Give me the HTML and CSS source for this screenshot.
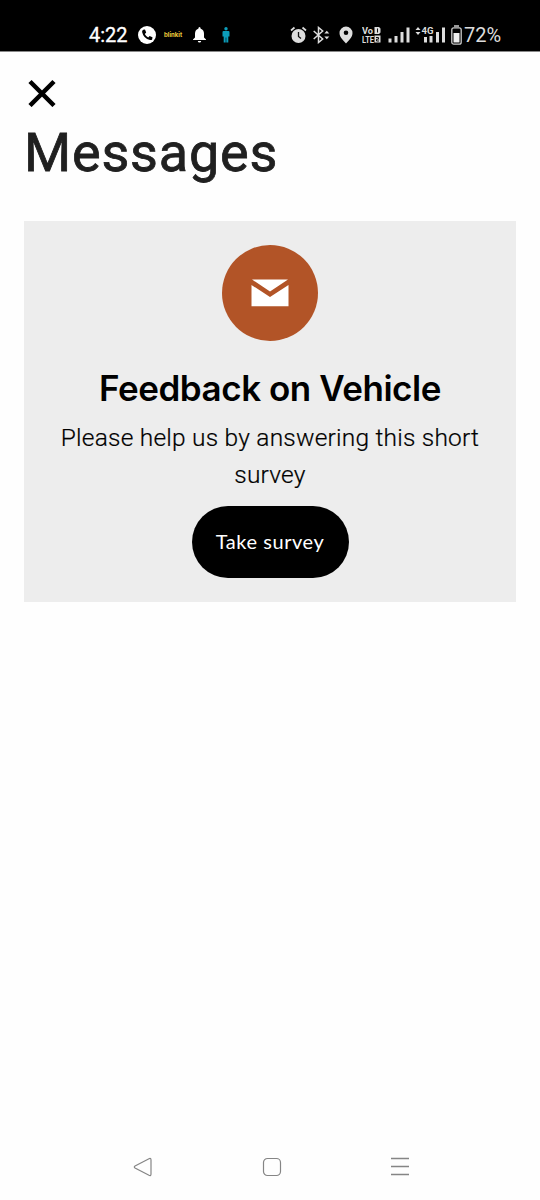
FILE: index.html
```html
<!DOCTYPE html>
<html lang="en">
<head>
<meta charset="utf-8">
<title>Messages</title>
<link rel="stylesheet" href="styles.css">
</head>
<body>
<div class="screen">
  <header class="status">
    <div class="status-left">
      <span class="clock">4:22</span>
      <svg class="phone" width="18" height="18" viewBox="0 0 18 18"><circle cx="9" cy="9" r="9" fill="#fff"/><path d="M5.2 3.8 7 3.5 8.2 6.6 6.8 7.9Q8 10.3 10.2 11.4L11.6 10 14.5 11.2 14.2 13.2Q13.6 14.4 12 14 5.5 12.5 4.1 6 3.9 4.5 5.2 3.8Z" fill="#000"/></svg>
      <span class="brand">blinkit</span>
      <svg class="bell" width="13" height="16" viewBox="0 0 13 16"><path d="M6.5 0Q7.6 0 7.7 1.7 11 2.8 11 6.7V10.5L13 12.4V13H0v-.6L2 10.500V6.7Q2 2.800 5.300 1.700 5.400 0 6.500 0ZM4.800 14H8.200Q8 15.500 6.500 15.500 5 15.500 4.800 14Z" fill="#fff"/></svg>
      <svg class="person" width="8" height="16" viewBox="0 0 8 16"><circle cx="4" cy="1.700" r="1.700" fill="#0c9dba"/><path d="M1.500 4H6.500Q7.500 4 7.500 5.200V9.500H6.300V15.500H4.300V10.500H3.700V15.500H1.700V9.500H.5V5.200Q.5 4 1.500 4Z" fill="#0c9dba"/></svg>
    </div>
    <div class="status-right">
      <svg width="17" height="18" viewBox="0 0 17 18"><circle cx="8.500" cy="10" r="7" fill="#ddd"/><path d="M1 4.500 4.500 1.500M16 4.500 12.500 1.500" stroke="#ddd" stroke-width="1.700"/><path d="M8.500 6V10.500L11 12.500" fill="none" stroke="#111" stroke-width="1.300"/></svg>
      <svg class="bluetooth" width="17" height="18" viewBox="0 0 17 18"><path d="M.7 5 9.700 13 5.500 16.500V1.500L9.700 5 .7 13" fill="none" stroke="#ddd" stroke-width="1.500"/><path d="M11.300 7.500 13.800 4.700 16.300 7.500ZM11.300 10.500 13.800 13.300 16.300 10.500Z" fill="#ddd"/></svg>
      <svg class="pin" width="14" height="18" viewBox="0 0 14 18"><path fill-rule="evenodd" d="M7 .5A6.500 6.500 0 0 1 13.500 7C13.500 11 10 14.300 7 17.500 4 14.300.5 11 .5 7A6.500 6.500 0 0 1 7 .5ZM7 4.500A2.300 2.300 0 1 0 7 9.100 2.300 2.300 0 1 0 7 4.500Z" fill="#ddd"/></svg>
      <svg class="volte" width="20" height="18" viewBox="0 0 20 18"><g class="tiny-label"><text x="0" y="7.800" textLength="11" lengthAdjust="spacingAndGlyphs">Vo</text><text x="0" y="16.500" textLength="12" lengthAdjust="spacingAndGlyphs">LTE</text></g><path d="M12.500 1H17L18.500 2.500V6.500L17 8H12.500ZM12.500 9.500H18.500V16.500H12.500Z" fill="#ddd"/><path d="M15.500 2.500V6.500M14 11.500H16.500V13.200H14.500V15H17" fill="none" stroke="#111"/></svg>
      <svg class="signal" width="23" height="18" viewBox="0 0 23 18"><path d="M.5 12.500h3v4h-3zM6.500 10h3v6.500h-3zM12.500 6h3v10.500h-3zM18.500 1.500h3v15h-3z" fill="#ddd"/></svg>
      <svg class="signal-4g" width="32" height="18" viewBox="0 0 32 18"><path d="M.5 4 3 1 5.500 4ZM.5 6 3 9 5.500 6ZM9 11h3v5.500H9zM14.500 10h3v6.500h-3zM21 6h3v10.500h-3zM27 1.500h3v15h-3z" fill="#ddd"/><text class="tiny-label" x="6.500" y="8" textLength="12" lengthAdjust="spacingAndGlyphs">4G</text></svg>
      <svg class="battery" width="11" height="20" viewBox="0 0 11 20"><path d="M3 1H8" stroke="#999" stroke-width="2"/><rect x=".8" y="2.800" width="9.400" height="16.400" rx="2" fill="none" stroke="#ccc" stroke-width="1.300"/><path d="M2.500 8h6v9.500h-6z" fill="#eee"/></svg>
      <span class="percent">72%</span>
    </div>
  </header>
  <main class="content">
    <svg class="close" width="28" height="28" viewBox="0 0 28 28"><path d="M2 2.500 26 26.500M26 2.500 2 26.500" stroke="#000" stroke-width="4.500"/></svg>
    <h1 class="title">Messages</h1>
    <section class="card">
      <div class="badge"><svg width="38" height="28" viewBox="0 0 38 28"><path d="M1 .5H37L19 12.500ZM.5 6 19 18 37.500 6V27.300H.5Z" fill="#fff"/></svg></div>
      <h2 class="card-title">Feedback on Vehicle</h2>
      <p class="card-text">Please help us by answering this short<br>survey</p>
      <button class="survey">Take survey</button>
    </section>
  </main>
  <nav class="navbar">
    <svg width="20" height="20" viewBox="0 0 20 20"><path d="M2 9 16 1.700Q18 .8 18 3V17Q18 19.200 16 18.300L2 11Q.6 10 2 9Z" fill="none" stroke="#858585" stroke-width="1.200"/></svg>
    <svg width="20" height="20" viewBox="0 0 20 20"><rect x="1.500" y="1.500" width="17" height="17" rx="4" fill="none" stroke="#858585" stroke-width="1.200"/></svg>
    <svg width="20" height="20" viewBox="0 0 20 20"><path d="M1 1.500H19M1 9.500H19M1 17.500H19" stroke="#858585" stroke-width="1.300"/></svg>
  </nav>
</div>
</body>
</html>
```
FILE: styles.css
```css
* { box-sizing: border-box; }
body { margin: 0; background: #fff; font-family: Roboto, "Liberation Sans", sans-serif; }
svg { display: block; flex: none; }
.screen { width: 540px; height: 1200px; display: flex; flex-direction: column; background: #fefefe; }
.status { height: 52px; padding: 18px 39px 0 89px; background: #000; border-bottom: 1px solid #888; display: flex; justify-content: space-between; color: #fff; }
.status-left, .status-right { display: flex; align-items: center; height: 33px; }
.clock { width: 38px; font-size: 20px; -webkit-text-stroke: 0.3px #fff; white-space: nowrap; }
.phone { margin-left: 11px; }
.brand { width: 19px; margin-left: 8px; font: 700 6px Inter, sans-serif; letter-spacing: 0; color: #f0cd3d; }
.bell { margin-left: 10px; }
.person { margin-left: 16px; }
.bluetooth { margin-left: 6px; }
.pin { margin-left: 9px; }
.volte { margin-left: 9px; }
.signal { margin-left: 6px; }
.signal-4g { margin-left: 4px; }
.battery { margin-left: 4px; }
.percent { width: 37px; margin-left: 2px; font-size: 20px; color: #ddd; white-space: nowrap; }
.tiny-label { font: 700 9px Roboto, sans-serif; fill: #ddd; }
.content { flex: 1; padding: 27px 24px 0; }
.close { margin-left: 4px; }
.title { margin: 10px 0 0; height: 104px; font-size: 54px; line-height: 72px; font-weight: 400; color: #202020; letter-spacing: 0.8px; -webkit-text-stroke: 0.8px #202020; }
.card { height: 381px; padding-top: 24px; background: #ededed; display: flex; flex-direction: column; align-items: center; color: #000; }
.badge { width: 96px; height: 96px; border-radius: 50%; background: #b25427; display: grid; place-items: center; }
.card-title { margin: 24px 0 0; font: 600 35px/46px Inter, sans-serif; letter-spacing: -0.45px; white-space: nowrap; }
.card-text { margin: 8px 0 0; font: 300 24.5px/37px Roboto, sans-serif; letter-spacing: 0.22px; -webkit-text-stroke: 0.2px #000; text-align: center; white-space: nowrap; }
.survey { width: 157px; height: 72px; margin: 13px 0 0; padding: 0 0 2px; border: 0; border-radius: 36px; background: #000; color: #fff; font: 400 20px Lato, sans-serif; letter-spacing: 0.55px; white-space: nowrap; }
.navbar { height: 66px; padding: 23px 130px 0 133px; display: flex; justify-content: space-between; }
```
